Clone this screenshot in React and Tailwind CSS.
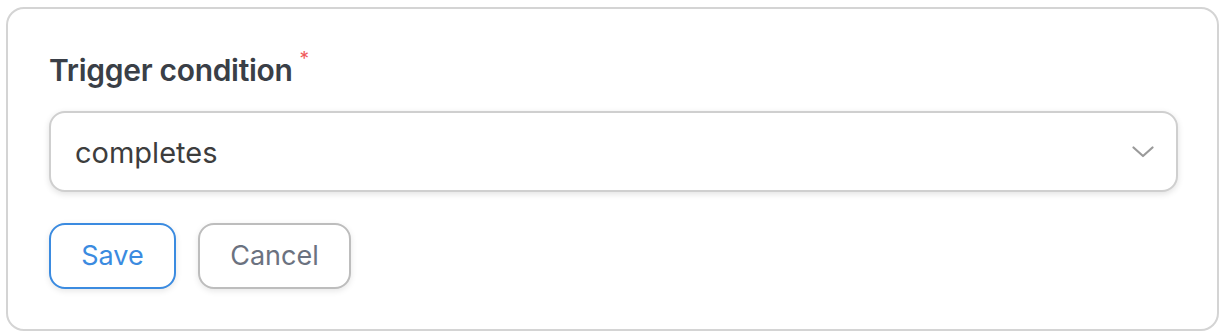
import React from "react";

export default function App() {
  return (
    <div className="w-[1226px] h-[334px] bg-white pt-[7px] pl-[6px]" style={{ fontFamily: "Inter, 'Noto Sans', sans-serif" }}>
      <div className="w-[1213px] h-[324px] border-2 border-[#d4d4d4] rounded-[18px] bg-white pl-[41px] pr-[39px] pt-[43px]">
        <div className="flex items-start h-[36px]">
          <span className="text-[30px] leading-[36px] font-semibold text-[#3a3f47] tracking-[-0.3px]">Trigger condition</span>
          <span className="ml-[7px] text-[19px] leading-[19px] text-[#f05a5a] -mt-[3px]">*</span>
        </div>
        <div className="mt-[23px] h-[81px] border-2 border-[#cfcfcf] rounded-[16px] bg-white shadow-[0_2px_6px_rgba(0,0,0,0.12)] flex items-center justify-between pl-[24px] pr-[22px]">
          <span className="text-[29px] leading-[36px] text-[#3d3d3d] mt-[3px]">completes</span>
          <svg width="22" height="12" viewBox="0 0 22 12" fill="none">
            <path d="M1.5 1.5 L11 10 L20.5 1.5" stroke="#9a9a9a" strokeWidth="2.2" strokeLinecap="round" strokeLinejoin="round" />
          </svg>
        </div>
        <div className="mt-[31px] flex gap-[22px]">
          <button className="w-[127px] h-[66px] border-2 border-[#3b8be0] rounded-[16px] bg-white text-[#3b8be0] text-[27px] shadow-[0_2px_6px_rgba(0,0,0,0.10)]">Save</button>
          <button className="w-[153px] h-[66px] border-2 border-[#bdbdbd] rounded-[16px] bg-white text-[#6b7280] text-[27px] shadow-[0_2px_6px_rgba(0,0,0,0.10)]">Cancel</button>
        </div>
      </div>
    </div>
  );
}
